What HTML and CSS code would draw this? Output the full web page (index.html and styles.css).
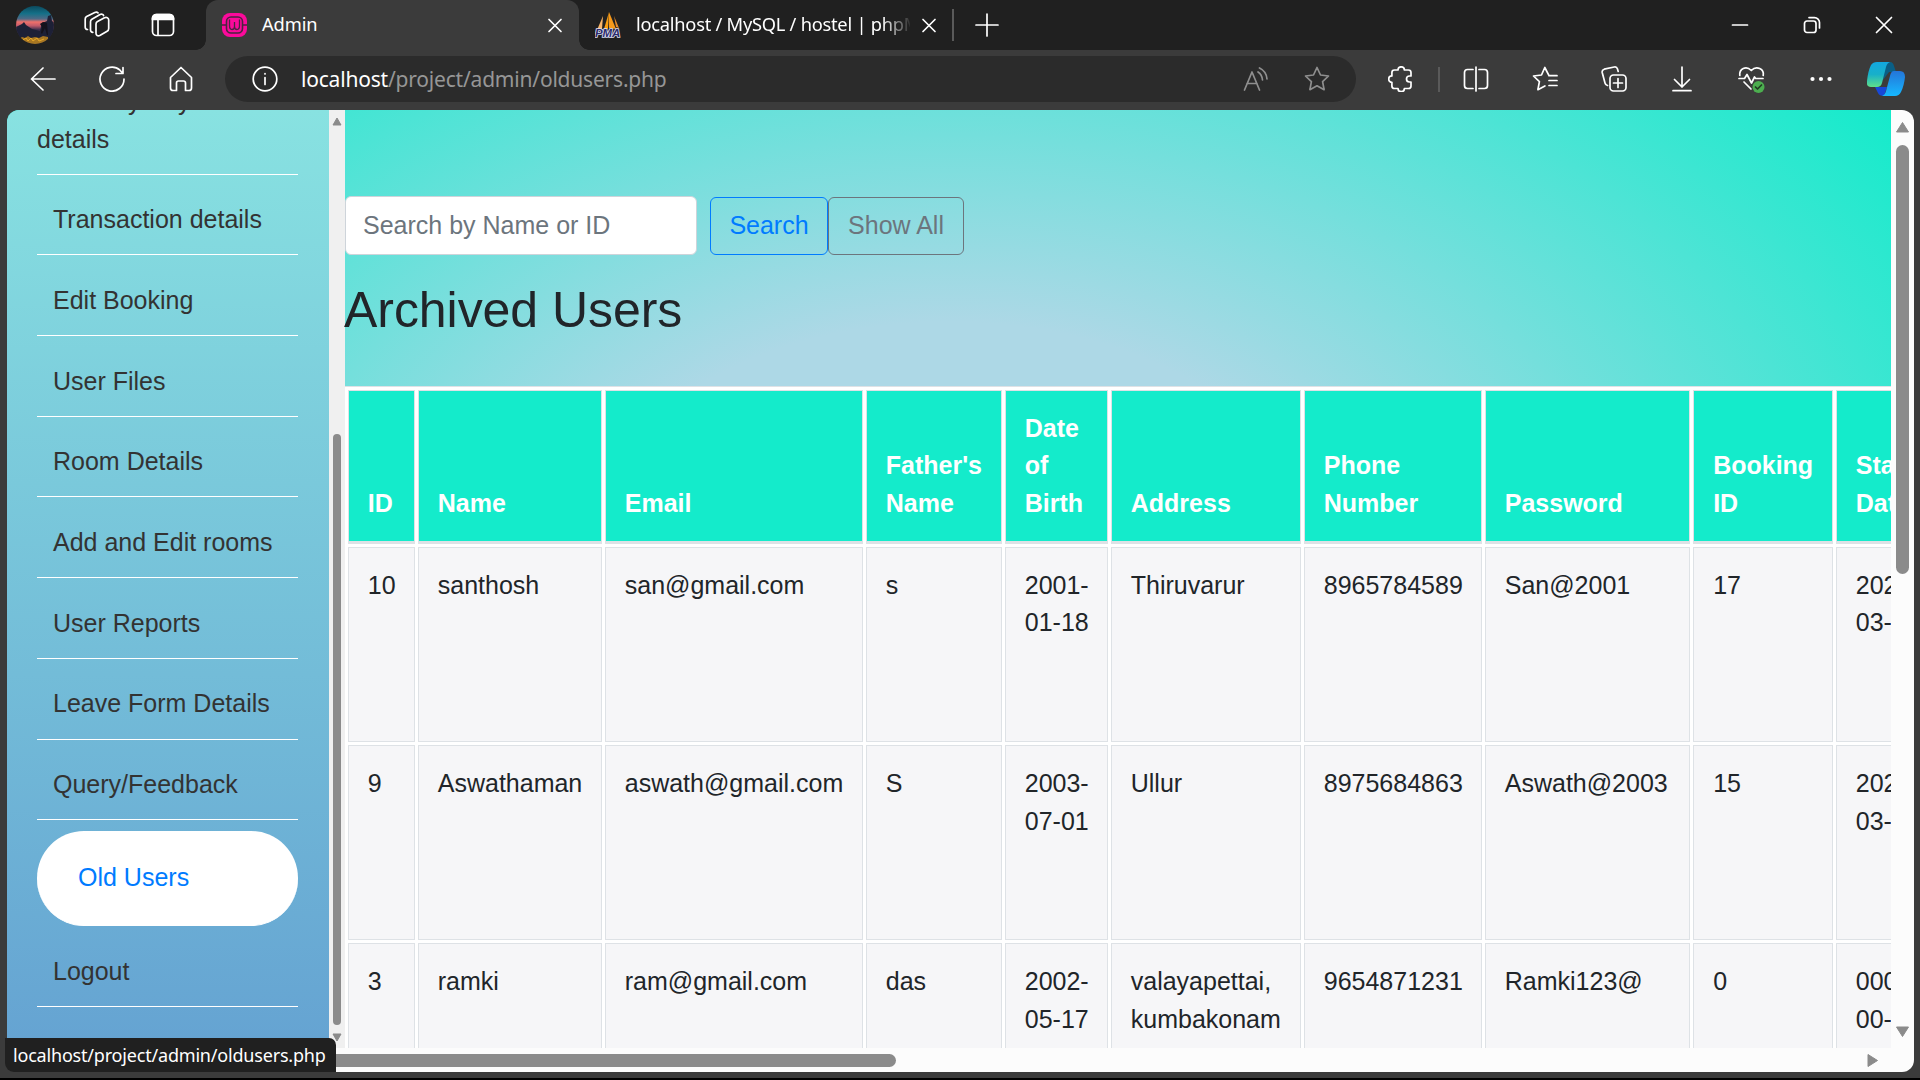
FILE: index.html
```html
<!DOCTYPE html>
<html lang="en">
<head>
<meta charset="utf-8">
<title>Admin</title>
<link rel="stylesheet" href="styles.css">
</head>
<body>
<div class="browser">
  <header class="tabstrip">
    <div class="strip-tools">
      <svg class="avatar" width="38" height="38" viewBox="0 0 38 38">
        <defs>
          <linearGradient id="sky" x1="0" y1="0" x2="0" y2="1">
            <stop offset="0" stop-color="#0b4a5e"/><stop offset=".2" stop-color="#157088"/><stop offset=".34" stop-color="#4f6a86"/><stop offset=".42" stop-color="#f0706a"/><stop offset=".52" stop-color="#c05a6a"/><stop offset=".62" stop-color="#40304e"/><stop offset="1" stop-color="#20202c"/>
          </linearGradient>
          <clipPath id="round"><circle cx="19" cy="19" r="19"/></clipPath>
        </defs>
        <g clip-path="url(#round)">
          <rect width="38" height="38" fill="url(#sky)"/>
          <path d="M0 21l6-3 2-2 2 3 6 4 8 2 2-8 5-2 1-5 3-1 1 6 3 2v22H0z" fill="#1d2036"/>
          <path d="M24 18l3-2 4 1 1 12-1 0-2-7-3 6-1-1 1-6z" fill="#15121c"/>
          <path d="M3 33l3-2 3 1 3-2 3 2 4-1 4 1 4-2 5 1v8H3z" fill="#a87722"/>
          <path d="M7 34l3-2 2 3 3-3 2 3 4-3 2 3 5-2" fill="none" stroke="#e8a829"/>
        </g>
      </svg>
      <svg class="ico ws" width="28" height="28" viewBox="0 0 28 28"><path d="M14.500 10.500l7-3.700c2-1 4.200 0 4.200 2.200v8.500c0 1.200-.6 2.200-1.600 2.700l-7.300 4.200c-2 1-3.800 0-3.800-2.200V13c0-1 .5-2 1.500-2.500z"/><path d="M9.800 21.300c-1.400 0-2.300-.9-2.300-2.300V10.800c0-1 .5-2 1.400-2.500L17 3.600c1.500-.8 3-.3 3.600.9"/><path d="M4.500 18.500c-1.400 0-2.300-.9-2.300-2.300V8c0-1 .5-2 1.400-2.500L11.800 1.500c1.200-.6 2.400-.5 3.200.3"/></svg>
      <svg class="ico" width="24" height="24" viewBox="0 0 24 24"><rect x="1.500" y="1.500" width="21" height="21" rx="4"/><path d="M1.500 6.500V5.500a4 4 0 0 1 4-4h13a4 4 0 0 1 4 4v1z" fill="#fff"/><path d="M7 7v15"/></svg>
    </div>
    <div class="tab tab-active">
      <svg class="wamp" width="25" height="24" viewBox="0 0 25 24"><rect width="25" height="24" rx="8" fill="#fb0a9b"/><rect x="4.500" y="4" width="16" height="16" rx="4.500" fill="none" stroke="#4a2340" stroke-width="1.600"/><path d="M0 12h4.500M20.500 12H25" stroke="#4a2340" stroke-width="1.400"/><path d="M7.500 6.500v6q0 4 2.500 4t2.500-3V9v4.500q0 3 2.500 3t2.500-4v-6" fill="none" stroke="#4a2340" stroke-width="1.300"/></svg>
      <span class="tab-title">Admin</span>
      <svg class="ico close" width="16" height="16" viewBox="0 0 16 16"><path d="M2 2.500l12 12M14 2.500l-12 12"/></svg>
    </div>
    <div class="tab tab-idle">
      <svg class="pma" width="26" height="26" viewBox="0 0 26 26"><path d="M14 0l-1 17H9z" fill="#f89c0e"/><path d="M8 4L2 18l5-1z" fill="#f8b56a"/><path d="M14 0l7 17-7-1z" fill="#f79a1c"/><path d="M19 4l5 12-3-1z" fill="#e58a2a"/><text x="0" y="25" class="pma-text" textLength="25" lengthAdjust="spacingAndGlyphs">PMA</text></svg>
      <span class="tab-title fade">localhost / MySQL / hostel | phpM</span>
      <svg class="ico close" width="16" height="16" viewBox="0 0 16 16"><path d="M2 2.500l12 12M14 2.500l-12 12"/></svg>
    </div>
    <i class="tab-rule"></i>
    <svg class="ico plus" width="24" height="24" viewBox="0 0 24 24"><path d="M1 12h22M12 1v22"/></svg>
    <div class="window-controls">
      <svg class="ico" width="18" height="18" viewBox="0 0 18 18"><path d="M1.500 9h15"/></svg>
      <svg class="ico" width="18" height="18" viewBox="0 0 18 18"><rect x="1.500" y="5" width="11.500" height="11.500" rx="2.500"/><path d="M6 1.600h5.500a5 5 0 0 1 5 5V12"/></svg>
      <svg class="ico" width="18" height="18" viewBox="0 0 18 18"><path d="M1.500 1.500l15 15M16.500 1.500l-15 15"/></svg>
    </div>
  </header>

  <nav class="toolbar">
    <div class="nav-tools">
      <svg class="ico" width="26" height="26" viewBox="0 0 26 26"><path d="M25 13H1.500M13 2L1.500 13 13 24"/></svg>
      <svg class="ico" width="26" height="26" viewBox="0 0 26 26"><path d="M25 13A12 12 0 1 1 21 4.200l2.500 2.800M24 1.500v6h-7"/></svg>
      <svg class="ico" width="26" height="26" viewBox="0 0 26 26"><path d="M2.500 11.500L13 1.500l10.500 10V22q0 2.500-2.500 2.500h-3.500V17q0-2-2-2h-5q-2 0-2 2v7.500H5q-2.500 0-2.500-2.500z"/></svg>
    </div>
    <div class="address">
      <svg class="ico" width="26" height="26" viewBox="0 0 26 26"><circle cx="13" cy="13" r="11.800"/><path d="M13 11.500v7M13 7.500v.5"/></svg>
      <span class="url"><b>localhost</b>/project/admin/oldusers.php</span>
      <svg class="ico dim read" width="25" height="25" viewBox="0 0 25 25"><path d="M1.500 23L9 5l7.500 18M4 16.500h10M15 5q4 2.500 4.500 8M16.500 1q7 3.500 7.500 11"/></svg>
      <svg class="ico dim" width="26" height="26" viewBox="0 0 26 26"><path d="M13 1.500l3.500 7.500 8 1-5.900 5.600 1.500 8.100L13 19.800l-7.100 3.900 1.500-8.100L1.500 10l8-1z"/></svg>
    </div>
    <div class="actions">
      <svg class="ico" width="26" height="26" viewBox="0 0 26 26"><path d="M6.500 4H10a3.200 3.200 0 0 1 6.400 0h4q2.600 0 2.600 2.600V10h-1.500a3 3 0 0 0 0 6H23v3.900q0 2.600-2.600 2.600h-4a3.200 3.200 0 0 1-6.400 0H6.500q-2.600 0-2.600-2.600V16.300a3.200 3.200 0 0 1 0-6.400V6.600Q3.900 4 6.500 4z"/></svg>
      <i class="bar-rule"></i>
      <svg class="ico" width="26" height="26" viewBox="0 0 26 26"><path d="M13 1v24M10 3.500H4.500q-3 0-3 3v13q0 3 3 3H10M16 3.500h5.500q3 0 3 3v13q0 3-3 3H16"/></svg>
      <svg class="ico" width="26" height="26" viewBox="0 0 26 26"><path d="M17 9.700L12.800 1.500 9.500 9l-8 1 5.900 5.600-1.500 8.100 7-3.700M17 9.700h8M17 14.500h8M17 19.500h8"/></svg>
      <svg class="ico" width="26" height="26" viewBox="0 0 26 26"><rect x="9" y="9" width="16" height="16" rx="3.500"/><path d="M17 12.500v9M12.500 17h9M6.500 19.500q-2-.5-2.500-2.500L1.200 6.500q-.5-2.500 2-3.300l10-2.200q2.500-.5 3.300 2l.7 2.500"/></svg>
      <svg class="ico" width="26" height="26" viewBox="0 0 26 26"><path d="M13 1v20M5.500 13.500L13 21l7.500-7.500M4 24.700h18"/></svg>
      <svg class="ico" width="28" height="28" viewBox="0 0 28 28"><path d="M1.800 10.500C1 4 8 0 13.300 5.500 18.500 0 26.500 4 25.200 10.500M1 13.500h5.500L9 9.500l4.500 8.500 3-6 1.200 1.500H25M6 17l7 7"/><circle cx="20.500" cy="22" r="6" fill="#4cae4f" stroke="none"/><path d="M17.500 22l2 2 4-4" stroke="#213c22"/></svg>
      <svg class="ico" width="26" height="26" viewBox="0 0 26 26"><g fill="#fff" stroke="none"><circle cx="4.500" cy="13" r="2.100"/><circle cx="13" cy="13" r="2.100"/><circle cx="21.500" cy="13" r="2.100"/></g></svg>
      <svg class="copilot" width="38" height="34" viewBox="0 0 38 34">
        <defs>
          <linearGradient id="cpA" x1="0" y1="0" x2="0" y2="1"><stop offset="0" stop-color="#12a8e0"/><stop offset=".5" stop-color="#18b0c9"/><stop offset="1" stop-color="#5fe08a"/></linearGradient>
          <linearGradient id="cpB" x1="0" y1="0" x2="0" y2="1"><stop offset="0" stop-color="#2475d8"/><stop offset="1" stop-color="#16b8ff"/></linearGradient>
        </defs>
        <path d="M18 0h5q3 0 4 4l2 6h-7l-6 8z" fill="#0a5f86"/>
        <path d="M8 25h12l-3 9q-5 0-6-3z" fill="#1748d8"/>
        <path d="M10 0h13q-3 1-4 5l-4 16q-1 4-5 4H4q-5 0-4-6Q1 9 4 3q2-3 6-3z" fill="url(#cpA)"/>
        <path d="M27 9h6q5 0 5 6-1 9-4 15-2 4-6 4H15q3-1 4-5l4-15q1-5 4-5z" fill="url(#cpB)"/>
      </svg>
    </div>
  </nav>

  <main class="page">
    <div class="content">
      <aside class="sidebar">
        <ul class="menu">
          <li class="wrapped">Monthly Payment<br>details</li>
          <li>Transaction details</li>
          <li>Edit Booking</li>
          <li>User Files</li>
          <li>Room Details</li>
          <li>Add and Edit rooms</li>
          <li>User Reports</li>
          <li>Leave Form Details</li>
          <li>Query/Feedback</li>
          <li class="current">Old Users</li>
          <li>Logout</li>
        </ul>
      </aside>
      <div class="side-scroll">
        <svg width="10" height="9" viewBox="0 0 10 9"><path d="M5 1l4 7H1z"/></svg>
        <i class="side-thumb"></i>
        <svg width="10" height="9" viewBox="0 0 10 9"><path d="M5 8l4-7H1z"/></svg>
      </div>
      <section class="archive">
        <form class="search">
          <input type="text" placeholder="Search by Name or ID">
          <button type="button" class="btn primary">Search</button>
          <button type="button" class="btn">Show All</button>
        </form>
        <h2>Archived Users</h2>
        <table>
          <colgroup><col class="c-id"><col class="c-name"><col class="c-email"><col class="c-father"><col class="c-dob"><col class="c-address"><col class="c-phone"><col class="c-password"><col class="c-booking"><col class="c-start"></colgroup>
          <thead><tr><th>ID</th><th>Name</th><th>Email</th><th>Father's Name</th><th>Date of Birth</th><th>Address</th><th>Phone Number</th><th>Password</th><th>Booking ID</th><th>Start Date</th></tr></thead>
          <tbody>
            <tr><td>10</td><td>santhosh</td><td>san@gmail.com</td><td>s</td><td>2001-01-18</td><td>Thiruvarur</td><td>8965784589</td><td>San@2001</td><td>17</td><td>2024-03-12</td></tr>
            <tr><td>9</td><td>Aswathaman</td><td>aswath@gmail.com</td><td>S</td><td>2003-07-01</td><td>Ullur</td><td>8975684863</td><td>Aswath@2003</td><td>15</td><td>2024-03-12</td></tr>
            <tr><td>3</td><td>ramki</td><td>ram@gmail.com</td><td>das</td><td>2002-05-17</td><td>valayapettai, kumbakonam</td><td>9654871231</td><td>Ramki123@</td><td>0</td><td>0000-00-00</td></tr>
          </tbody>
        </table>
      </section>
    </div>
    <div class="vscroll">
      <svg width="15" height="12" viewBox="0 0 15 12"><path d="M7.500 1.500l6 9.500h-12z"/></svg>
      <i class="vthumb"></i>
      <svg width="15" height="12" viewBox="0 0 15 12"><path d="M7.500 10.500l6-9.500h-12z"/></svg>
    </div>
    <div class="hscroll">
      <i class="hthumb"></i>
      <svg width="12" height="15" viewBox="0 0 12 15"><path d="M10.500 7.500L1 1.500v12z"/></svg>
    </div>
  </main>
  <div class="status">localhost/project/admin/oldusers.php</div>
</div>
</body>
</html>
```

FILE: styles.css
```css
* { box-sizing: border-box; }

body {
  margin: 0;
  width: 1920px;
  height: 1080px;
  overflow: hidden;
  background: #000;
  font-family: "Liberation Sans", Arial, sans-serif;
  font-size: 25px;
  line-height: 37.5px;
  color: #212529;
}

.browser {
  position: relative;
  display: flex;
  flex-direction: column;
  height: 1078px;
  background: #3b3b3b;
}

svg { display: block; flex: none; }
.ico { fill: none; stroke: #fff; stroke-width: 1.7; stroke-linecap: round; stroke-linejoin: round; }
.dim { stroke: #8f8f8f; }

/* Tab strip */
.tabstrip {
  display: flex;
  align-items: center;
  height: 50px;
  background: #202020;
  color: #fff;
  font-family: "Noto Sans", sans-serif;
  font-size: 18.3px;
  letter-spacing: -0.1px;
}
.strip-tools {
  display: flex;
  align-items: center;
  width: 206px;
  height: 50px;
  padding-left: 16px;
}
.avatar { margin-right: 29px; }
.ws { margin-right: 40px; }

.tab { display: flex; align-items: center; height: 50px; }
.tab-active {
  position: relative;
  width: 373px;
  padding: 0 16px 0 16px;
  background: #3b3b3b;
  border-radius: 12px 12px 0 0;
}
.tab-active::before, .tab-active::after {
  content: "";
  position: absolute;
  bottom: 0;
  width: 10px;
  height: 10px;
}
.tab-active::before { left: -10px; background: radial-gradient(circle at 0 0, transparent 9.5px, #3b3b3b 10px); }
.tab-active::after { right: -10px; background: radial-gradient(circle at 100% 0, transparent 9.5px, #3b3b3b 10px); }
.tab-title { white-space: nowrap; line-height: 48px; height: 50px; }
.wamp { margin-right: 15px; }
.close { margin-left: auto; }
.tab-idle { width: 358px; padding: 0 0 0 16px; }
.pma { margin-right: 15px; }
.pma-text { font: italic bold 10px "Liberation Sans", sans-serif; fill: #2b2c6c; stroke: #dcdcf0; stroke-width: 1.5px; paint-order: stroke; }
.fade { width: 274px; overflow: hidden; letter-spacing: -0.25px; mask-image: linear-gradient(90deg, #000 246px, transparent 276px); }
.tab-rule { width: 2px; height: 32px; margin-left: 15px; background: #5a5a5a; }
.plus { margin-left: 21px; }
.window-controls { display: flex; gap: 54px; margin-left: auto; padding-right: 27px; }

/* Toolbar */
.toolbar { display: flex; align-items: center; height: 60px; padding-bottom: 2px; }
.nav-tools { display: flex; gap: 43px; width: 225px; padding-left: 30px; }
.address {
  display: flex;
  align-items: center;
  width: 1131px;
  height: 46px;
  padding: 0 26px 0 27px;
  border-radius: 23px;
  background: #2b2b2b;
  font-family: "Noto Sans", sans-serif;
}
.url { margin-left: 23px; font-size: 21px; letter-spacing: -0.2px; color: #969696; line-height: 46px; height: 46px; }
.url b { color: #fff; font-weight: 400; }
.read { margin: 0 36px 0 auto; }
.actions { display: flex; align-items: center; flex: 1; padding-left: 32px; }
.actions .ico { margin-right: 42.8px; }
.actions .ico:nth-child(1) { margin-right: 24px; }
.actions .ico:nth-child(7) { margin-right: 41.5px; }
.actions .ico:nth-child(8) { margin-right: 33px; }
.bar-rule { width: 2px; height: 25px; margin-right: 23px; background: #5a5a5a; }

/* Page viewport */
.page {
  display: grid;
  grid-template: 938px 24px / 1884px 23px;
  width: 1907px;
  margin-left: 7px;
  border-radius: 12px;
  overflow: hidden;
}
.content {
  display: flex;
  overflow: hidden;
  background: radial-gradient(1171px 720px at 942px 428px, #add8e6 30%, #14ebcb 100%);
}
.sidebar {
  flex: none;
  width: 322px;
  padding: 0 31px 0 30px;
  background: linear-gradient(180deg, #88e2e1 0%, #65a3d2 100%);
  color: #333;
}
.menu { list-style: none; margin: 0; padding: 0; }
.menu li { height: 80.7px; padding: 26.6px 0 0 16px; border-bottom: 1px solid #fff; }
.menu .wrapped { width: 261px; height: 101px; margin-top: -36.3px; padding: 9.5px 0 0; text-indent: 16px; }
.menu .current {
  height: 95px;
  margin-top: 11px;
  padding: 27.3px 0 0 41px;
  border-radius: 47px;
  background: #fff;
  color: #007bff;
}
.side-scroll {
  display: flex;
  flex-direction: column;
  align-items: center;
  flex: none;
  width: 16px;
  padding-top: 7px;
  background: #f0f0f0;
}
.side-scroll svg, .vscroll svg, .hscroll svg { fill: #8b8b8b; stroke: #8b8b8b; stroke-linejoin: round; }
.side-thumb { width: 8px; height: 591px; margin: 308px 0 8px; border-radius: 4px; background: #8b8b8b; }

.archive { flex: 1; min-width: 0; }
.search { display: flex; align-items: flex-start; padding-top: 86px; }
.search input {
  width: 352px;
  height: 59px;
  margin-right: 13px;
  padding: 0 17px;
  border: 1px solid #ced4da;
  border-radius: 6px;
  font: inherit;
}
.search input::placeholder { color: #6c757d; opacity: 1; }
.btn {
  width: 136px;
  height: 58px;
  margin-top: 1px;
  padding: 0;
  border: 1px solid #6c757d;
  border-radius: 6px;
  background: none;
  color: #6c757d;
  font: inherit;
}
.btn.primary { width: 118px; border-color: #007bff; color: #007bff; }
h2 { margin: 25px 0 46px -1px; font-size: 50px; line-height: 60px; font-weight: 400; letter-spacing: -0.05px; }

table {
  table-layout: fixed;
  width: 1600px;
  border: 1px solid #dee2e6;
  border-left: 0;
  border-spacing: 3px;
  background: #fff;
}
th, td {
  padding: 18.75px 16px 18.75px 18.75px;
  border: 1px solid #dee2e6;
  text-align: left;
}
th { height: 154px; vertical-align: bottom; border-bottom-width: 3px; background: #14ebcb; color: #fff; }
td { height: 195px; padding-top: 19px; vertical-align: top; background: #f6f6f8; }
tbody tr:first-child td { padding-top: 18.75px; }
.c-id { width: 67px; }
.c-name { width: 184px; }
.c-email { width: 258px; }
.c-father { width: 136px; }
.c-dob { width: 103px; }
.c-address { width: 190px; }
.c-phone { width: 178px; }
.c-password { width: 205.4px; }
.c-booking { width: 139.6px; }

/* Page scrollbars */
.vscroll {
  display: flex;
  flex-direction: column;
  align-items: center;
  padding-top: 11px;
  background: #fcfcfc;
}
.vthumb { width: 13px; height: 429px; margin: 12px 0 452px; border-radius: 7px; background: #8b8b8b; }
.hscroll { display: flex; align-items: center; grid-column: 1 / 3; background: #fcfcfc; }
.hthumb { flex: none; width: 869px; height: 13px; margin: 0 971px 0 20px; border-radius: 7px; background: #8b8b8b; }

/* Link target bubble over the page's lower-left corner */
.status {
  position: absolute;
  left: 5px;
  bottom: 6px;
  width: 331px;
  height: 34px;
  padding-left: 8px;
  border-radius: 0 7px 0 9px;
  background: #202020;
  color: #fff;
  font: 18px/34px "Noto Sans", sans-serif;
  letter-spacing: -0.19px;
  white-space: nowrap;
}
```
